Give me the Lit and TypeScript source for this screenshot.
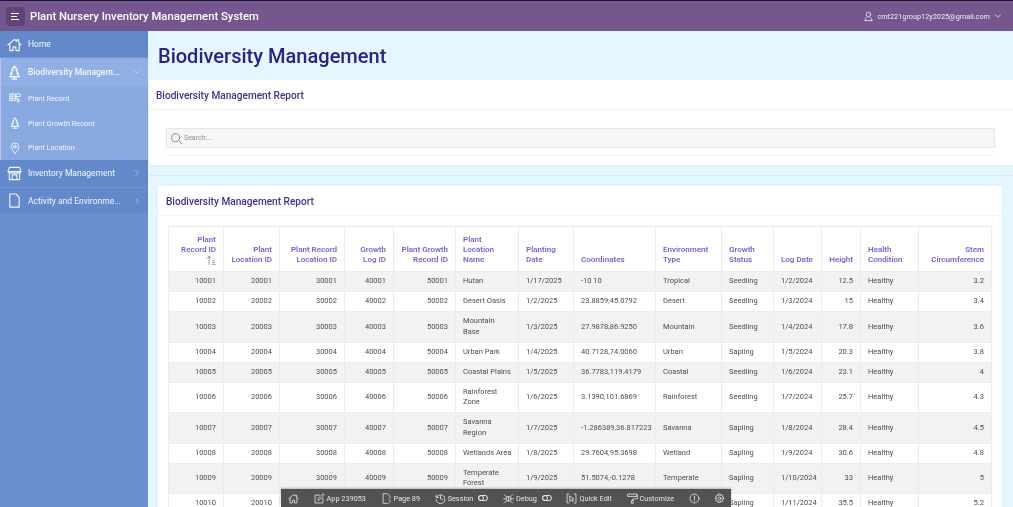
import { LitElement, html, css, svg } from "lit";
import { customElement } from "lit/decorators.js";

const cols = [55, 56, 65, 49, 62, 63, 55, 82, 66, 52, 48, 39, 58, 73];
const rows: string[][] = [
  ["10001","20001","30001","40001","50001","Hutan","1/17/2025","-10 10","Tropical","Seedling","1/2/2024","12.5","Healthy","3.2"],
  ["10002","20002","30002","40002","50002","Desert Oasis","1/2/2025","23.8859,45.0792","Desert","Seedling","1/3/2024","15","Healthy","3.4"],
  ["10003","20003","30003","40003","50003","Mountain\nBase","1/3/2025","27.9878,86.9250","Mountain","Seedling","1/4/2024","17.8","Healthy","3.6"],
  ["10004","20004","30004","40004","50004","Urban Park","1/4/2025","40.7128,74.0060","Urban","Sapling","1/5/2024","20.3","Healthy","3.8"],
  ["10005","20005","30005","40005","50005","Coastal Plains","1/5/2025","36.7783,119.4179","Coastal","Seedling","1/6/2024","23.1","Healthy","4"],
  ["10006","20006","30006","40006","50006","Rainforest\nZone","1/6/2025","3.1390,101.6869","Rainforest","Seedling","1/7/2024","25.7","Healthy","4.3"],
  ["10007","20007","30007","40007","50007","Savanna\nRegion","1/7/2025","-1.286389,36.817223","Savanna","Sapling","1/8/2024","28.4","Healthy","4.5"],
  ["10008","20008","30008","40008","50008","Wetlands Area","1/8/2025","29.7604,95.3698","Wetland","Sapling","1/9/2024","30.6","Healthy","4.8"],
  ["10009","20009","30009","40009","50009","Temperate\nForest","1/9/2025","51.5074,-0.1278","Temperate","Sapling","1/10/2024","33","Healthy","5"],
  ["10010","20010","30010","40010","50010","Alpine Meadow","1/10/2025","46.8182,8.2275","Alpine","Sapling","1/11/2024","35.5","Healthy","5.2"],
];
const heads: [string[], boolean][] = [
  [["Plant","Record ID"], true],[["Plant","Location ID"], true],[["Plant Record","Location ID"], true],[["Growth","Log ID"], true],[["Plant Growth","Record ID"], true],
  [["Plant","Location","Name"], false],[["Planting","Date"], false],[["Coordinates"], false],[["Environment","Type"], false],[["Growth","Status"], false],
  [["Log Date"], false],[["Height"], true],[["Health","Condition"], false],[["Stem","Circumference"], true],
];
const numeric = new Set([0,1,2,3,4,11,13]);

const ic = (d: unknown, size = 16) => html`<svg class="ic" width=${size} height=${size} viewBox="0 0 16 16" fill="none" stroke="currentColor" stroke-width="1.2" stroke-linecap="round" stroke-linejoin="round">${d}</svg>`;
const home = svg`<path d="M1 8.500 8 2.500l2.500 2.100V3h2v3.300L15 8.500M3 7v7.500h3.500v-4h3v4H13V7"/>`;
const tree = svg`<path d="M8 1 5.300 5h1.200L4 8.800h1.500L3 12.500h10L10.500 8.800H12L9.500 5h1.200ZM8 12.500V15M5.500 15h5" stroke-width="1.400"/>`;
const rec = svg`<path d="M1 2.500h7.500v9H1ZM1 5.500h7.500M1 8.500h7.500M4 2.500v9M10 2.500h5v3.500h-5ZM10.500 8l4 3.200-1.700.4-.7 1.800Z"/>`;
const pin = svg`<path d="M8 15S3 10 3 6.300a5 5 0 0 1 10 0C13 10 8 15 8 15Z"/><circle cx="8" cy="6.300" r="1.800"/>`;
const store = svg`<path d="M2.500 1.500h11l1.500 4.500a2.300 2.300 0 0 1-3.500 1 2.700 2.700 0 0 1-3.500 0 2.700 2.700 0 0 1-3.500 0A2.300 2.300 0 0 1 1 6ZM1 6h14M2.500 8v6.500h11V8M5.500 14.500v-5h5v5"/>`;
const doc = svg`<path d="M3 1h6.500L13 4.800V15H3Z"/>`;
const chevR = svg`<path d="m6 4 4 4-4 4"/>`;
const chevD = svg`<path d="m4 6 4 4 4-4"/>`;

@customElement("tool-item")
class ToolItem extends LitElement {
  static properties = { label: {}, toggle: { type: Boolean } };
  label = "";
  toggle = false;
  static styles = css`
    :host { display: flex; align-items: center; gap: 2px; height: 100%; color: #e6e6e6; font-size: 7.300px; white-space: nowrap; }
    .t { width: 10px; height: 6px; border: 1px solid #e6e6e6; border-radius: 3px; margin-left: 3px; position: relative; box-sizing: border-box; }
    .t::after { content: ""; position: absolute; left: -1px; top: -1px; width: 6px; height: 6px; border: 1px solid #e6e6e6; border-radius: 50%; box-sizing: border-box; }
  `;
  render() {
    return html`<slot></slot>${this.label}${this.toggle ? html`<span class="t"></span>` : ""}`;
  }
}

@customElement("app-root")
class AppRoot extends LitElement {
  static styles = css`
    :host { display: block; width: 1013px; height: 507px; overflow: hidden; position: relative; font-family: Roboto, "Open Sans", sans-serif; background: #e4f6ff; color: #3a3a3a; filter: blur(0.3px); }
    .ic { flex: none; display: block; }
    .top { height: 30px; border-top: 1px solid #1e1630; background: #75568f; display: flex; align-items: center; color: #fff; padding: 0 6px; }
    .burger { width: 19px; height: 19px; border-radius: 4px; background: #5e4477; display: flex; flex-direction: column; justify-content: center; align-items: flex-start; gap: 2px; padding-left: 5px; box-sizing: border-box; margin-right: 5px; }
    .burger i { display: block; height: 1px; background: #fff; }
    .brand { font-size: 11.300px; font-weight: 500; flex: 1; white-space: nowrap; }
    .user { display: flex; align-items: center; gap: 3px; font-size: 7.300px; color: #f1ecf5; padding-right: 4px; }
    .body { display: flex; height: 476px; }
    .side { width: 148px; flex: none; background: #6b90d2; color: #f2f6fd; font-size: 8.500px; }
    .nav { display: flex; align-items: center; height: 27.500px; padding: 0 6px 0 7px; gap: 6px; background: #6489cb; border-bottom: 1px solid #6f93d3; box-sizing: border-box; white-space: nowrap; }
    .nav span { flex: 1; }
    .nav .chev { opacity: .6; flex: none; }
    .nav.first { height: 27px; }
    .open { background: #89a9e1; border-left: 1px solid #c9bdf0; }
    .open .nav { background: #8fafe5; border: 0; height: 28px; padding-left: 6px; font-weight: 500; }
    .sub { display: flex; align-items: center; height: 24.700px; padding-left: 8px; gap: 7px; font-size: 7.300px; white-space: nowrap; }
    .main { flex: 1; min-width: 0; padding-left: 1px; }
    h1 { margin: 0; height: 49px; padding-left: 9px; display: flex; align-items: center; font-size: 20.050px; font-weight: 500; color: #2a2382; }
    .search-region { background: #fff; height: 85px; box-shadow: 0 1px 2px rgba(0,0,0,.06); }
    .rh { height: 30px; box-sizing: border-box; border-bottom: 1px solid #f0f0f0; padding: 2px 7px 0; display: flex; align-items: center; font-size: 10.100px; font-weight: 500; color: #41308f; }
    .search-wrap { margin: 18px 18px 0 17px; padding-bottom: 7px; border-bottom: 1px solid #f2f2f2; }
    .search { height: 20px; background: #f6f6f6; border: 1px solid #e6e6e6; box-sizing: border-box; display: flex; align-items: center; padding-left: 3px; gap: 1px; font-size: 7px; color: #8b8b8b; }
    .band { height: 10px; border-bottom: 1px solid #d6e8f1; }
    .card { margin: 10px 11px 0 9px; background: #fff; box-shadow: 0 0 2px rgba(0,0,0,.06); }
    .card .rh { height: 30px; padding: 2px 8px 0; }
    .tw { padding: 10px 10px 0; }
    table { border-collapse: collapse; table-layout: fixed; width: 823px; font-size: 7.500px; }
    th { color: #7a63cf; font-weight: 600; font-size: 8px; line-height: 10px; vertical-align: bottom; padding: 0 7px 6px; height: 38px; text-align: left; border: 1px solid #ececec; }
    th.n { text-align: right; }
    th b { display: block; font-weight: inherit; white-space: nowrap; }
    .sort { display: flex; justify-content: flex-end; color: #777; height: 10px; }
    td { padding: 0 7px; line-height: 10.300px; height: 19px; border: 1px solid #ececec; color: #4d4d4d; vertical-align: middle; white-space: pre; }
    td.n { text-align: right; }
    tr.tall td { height: 29.500px; }
    tbody tr:nth-child(odd) { background: #f2f2f2; }
    .toolbar { position: absolute; left: 281px; bottom: 0; width: 450px; height: 18px; box-sizing: border-box; padding: 0 6px 0 7px; background: #525252; display: flex; align-items: center; gap: 14.600px; color: #e6e6e6; box-shadow: 0 -1px 2px rgba(0,0,0,.25); }
  `;

  render() {
    const tall = new Set([2, 5, 6, 8]);
    return html`
      <div class="top">
        <div class="burger"><i style="width:8px"></i><i style="width:6px"></i><i style="width:8px"></i></div>
        <div class="brand">Plant Nursery Inventory Management System</div>
        <div class="user">${ic(svg`<circle cx="8" cy="5" r="3.200"/><path d="M3 14c0-3 1.500-4.500 2.800-5M13 14c0-3-1.500-4.500-2.800-5M3 14h10"/>`, 11)}<span>cmt221group12y2025@gmail.com</span>${ic(chevD, 10)}</div>
      </div>
      <div class="body">
        <nav class="side">
          <div class="nav first">${ic(home, 15)}<span>Home</span></div>
          <div class="open">
            <div class="nav">${ic(tree, 15)}<span>Biodiversity Managem...</span><span class="chev">${ic(chevD, 10)}</span></div>
            <div class="sub">${ic(rec, 12)}Plant Record</div>
            <div class="sub">${ic(tree, 12)}Plant Growth Record</div>
            <div class="sub">${ic(pin, 12)}Plant Location</div>
          </div>
          <div class="nav">${ic(store, 15)}<span>Inventory Management</span><span class="chev">${ic(chevR, 10)}</span></div>
          <div class="nav">${ic(doc, 15)}<span>Activity and Environme...</span><span class="chev">${ic(chevR, 10)}</span></div>
        </nav>
        <main class="main">
          <h1>Biodiversity Management</h1>
          <section class="search-region">
            <div class="rh">Biodiversity Management Report</div>
            <div class="search-wrap"><div class="search">${ic(svg`<circle cx="7" cy="7" r="5"/><path d="m10.700 10.700 4 4"/>`, 13)}Search...</div></div>
          </section>
          <div class="band"></div>
          <section class="card">
            <div class="rh">Biodiversity Management Report</div>
            <div class="tw">
              <table>
                <colgroup>${cols.map((w) => html`<col style="width:${w}px" />`)}</colgroup>
                <thead><tr>${heads.map(([h, n], i) => html`<th class=${n ? "n" : ""}>${h.map((l) => html`<b>${l}</b>`)}${i === 0 ? html`<span class="sort">${ic(svg`<path d="M5 15V2M2 5l3-3 3 3M10.500 9h2M10.500 12h3M10.500 15h4.500" />`, 10)}</span>` : ""}</th>`)}</tr></thead>
                <tbody>${rows.map((r, i) => html`<tr class=${tall.has(i) ? "tall" : ""}>${r.map((c, j) => html`<td class=${numeric.has(j) ? "n" : ""}>${c}</td>`)}</tr>`)}</tbody>
              </table>
            </div>
          </section>
        </main>
      </div>
      <div class="toolbar">
        <tool-item>${ic(home, 11)}</tool-item>
        <tool-item label="App 239053">${ic(svg`<path d="M13 8v6.500H1.500V3H8M6 10l.5-2.500L13 1l2 2-6.500 6.500Z"/>`, 11)}</tool-item>
        <tool-item label="Page 89">${ic(svg`<path d="M9 15H3V1h6.500L13 4.800V7M11 9l3 3-3 3"/>`, 11)}</tool-item>
        <tool-item label="Session" toggle>${ic(svg`<path d="M1.500 3v3.500H5M2 6.500a6.500 6.500 0 1 1-.5 3M8 4v4.500l3 1"/>`, 11)}</tool-item>
        <tool-item label="Debug" toggle>${ic(svg`<circle cx="8" cy="8.500" r="3.500"/><path d="M8 5v7M2 2.500l3 3M14 2.500l-3 3M1 8.500h3.500M11.500 8.500H15M2 14.500l3-3M14 14.500l-3-3"/>`, 11)}</tool-item>
        <tool-item label="Quick Edit">${ic(svg`<path d="M4 1.500H1.500v13H4M12 1.500h2.500v13H12M5.500 4.500l6 4-2.500.7 1.800 2.500-1.200.8-1.800-2.500L6 12Z"/>`, 11)}</tool-item>
        <tool-item label="Customize">${ic(svg`<path d="M1.500 1.500h13v3.500h-13ZM14.500 3.200H15.500V8L8 9v2M7 11h2v4H7Z"/>`, 11)}</tool-item>
        <tool-item>${ic(svg`<circle cx="8" cy="8" r="6.500"/><path d="M8 4.500v4.500M8 11v.5"/>`, 11)}</tool-item>
        <tool-item>${ic(svg`<circle cx="8" cy="8" r="2.200"/><path d="M6.800 1.500h2.400l.4 2 1.800-1 1.700 1.700-1 1.800 2 .4v2.400l-2 .4 1 1.800-1.700 1.700-1.800-1-.4 2H6.800l-.4-2-1.800 1-1.700-1.700 1-1.800-2-.4V6.800l2-.4-1-1.800 1.700-1.700 1.800 1Z"/>`, 11)}</tool-item>
      </div>
    `;
  }
}
void AppRoot; void ToolItem;
